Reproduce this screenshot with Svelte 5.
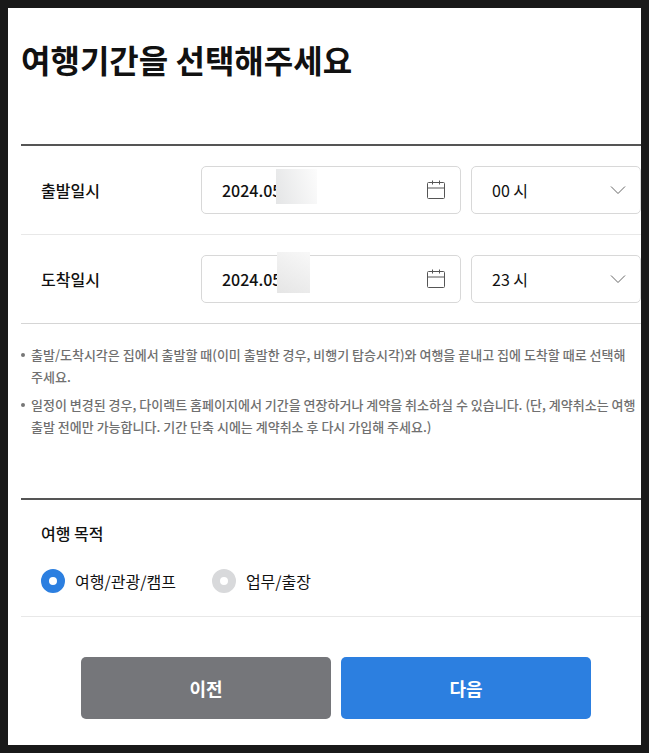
<script>
    let schedule = [
        { id: "departure", label: "출발일시", date: "2024.05", hour: "00" },
        { id: "arrival", label: "도착일시", date: "2024.05", hour: "23" },
    ];

    let purpose = "travel";

    const hours = Array.from({ length: 24 }, (_, i) =>
        String(i).padStart(2, "0"),
    );

    const notes = [
        "출발/도착시각은 집에서 출발할 때(이미 출발한 경우, 비행기 탑승시각)와 여행을 끝내고 집에 도착할 때로 선택해\n주세요.",
        "일정이 변경된 경우, 다이렉트 홈페이지에서 기간을 연장하거나 계약을 취소하실 수 있습니다. (단, 계약취소는 여행\n출발 전에만 가능합니다. 기간 단축 시에는 계약취소 후 다시 가입해 주세요.)",
    ];

    const purposes = [
        { value: "travel", label: "여행/관광/캠프" },
        { value: "business", label: "업무/출장" },
    ];
</script>

<main class="frame">
    <form class="content" on:submit|preventDefault>
        <h1>여행기간을 선택해주세요</h1>

        <div class="schedule">
            {#each schedule as item}
                <div class="row">
                    <label class="row-label" for="{item.id}-date"
                        >{item.label}</label
                    >
                    <div class="field date-field">
                        <input
                            type="text"
                            id="{item.id}-date"
                            bind:value={item.date}
                        />
                        <span class="mask {item.id}"></span>
                        <button
                            type="button"
                            class="calendar-btn"
                            aria-label="달력"
                        >
                            <svg width="20" height="20" viewBox="0 0 20 20">
                                <rect x="1.5" y="2.5" width="17" height="16" rx="1" />
                                <path d="M1.5 8h17M6.5 0.5v4M13.5 0.5v4" />
                            </svg>
                        </button>
                    </div>
                    <div class="field hour-field">
                        <select
                            aria-label="{item.label} 시각"
                            bind:value={item.hour}
                        >
                            {#each hours as hour}
                                <option value={hour}>{hour} 시</option>
                            {/each}
                        </select>
                        <svg
                            class="chevron"
                            width="16"
                            height="10"
                            viewBox="0 0 16 10"
                        >
                            <path d="M1 1.5l7 7 7-7" />
                        </svg>
                    </div>
                </div>
            {/each}
        </div>

        <ul class="notes">
            {#each notes as note}
                <li>{note}</li>
            {/each}
        </ul>

        <fieldset class="purpose">
            <legend>여행 목적</legend>
            <div class="options">
                {#each purposes as option}
                    <label class="option">
                        <input
                            type="radio"
                            name="purpose"
                            value={option.value}
                            bind:group={purpose}
                        />
                        {option.label}
                    </label>
                {/each}
            </div>
        </fieldset>

        <div class="actions">
            <button type="button" class="btn prev">이전</button>
            <button type="submit" class="btn next">다음</button>
        </div>
    </form>
</main>

<style>
    :global(body) {
        margin: 0;
        background: #191919;
    }

    .frame {
        border: 8px solid #191919;
        background: #fff;
        color: #111;
        overflow: hidden;
        font-family: "Noto Sans CJK KR", sans-serif;
        font-size: 16px;
        line-height: 24px;
    }

    /* the form runs on past the right edge of the frame */
    .content {
        margin: 0 -10px 0 13px;
        padding: 27px 0 26px;
    }

    h1 {
        margin: 0 0 61px;
        font-size: 32px;
        line-height: 48px;
        font-weight: 700;
    }

    .schedule {
        border-top: 2px solid #555;
        border-bottom: 1px solid #d5d5d5;
    }

    .row {
        display: grid;
        grid-template-columns: 150px minmax(0, 26fr) minmax(0, 17fr);
        gap: 10px;
        align-items: center;
        padding: 20px 10px 20px 20px;
    }

    .row + .row {
        border-top: 1px solid #e8e8e8;
    }

    .row-label,
    legend {
        font-weight: 500;
    }

    .field {
        position: relative;
        display: flex;
        align-items: center;
        box-sizing: border-box;
        height: 48px;
        border: 1px solid #d8d8d8;
        border-radius: 5px;
    }

    .field input,
    .field select {
        flex: 1;
        min-width: 0;
        height: 46px;
        padding: 0 20px;
        border: 0;
        background: none;
        color: #111;
        font-family: inherit;
        font-size: 16px;
        font-weight: 500;
        outline: none;
    }

    .field select {
        appearance: none;
        font-weight: 400;
        cursor: pointer;
    }

    .mask {
        position: absolute;
        pointer-events: none;
    }

    .mask.departure {
        top: 2px;
        left: 74px;
        width: 41px;
        height: 35px;
        background: linear-gradient(75deg, #e4e5e6, #fcfcfc);
    }

    .mask.arrival {
        top: -4px;
        left: 75px;
        width: 33px;
        height: 41px;
        background: linear-gradient(30deg, #e5e5e5, #f8f8f8);
    }

    .calendar-btn {
        display: flex;
        padding: 0;
        margin-right: 14px;
        border: 0;
        background: none;
        cursor: pointer;
    }

    .field svg {
        fill: none;
        stroke: #555;
    }

    .field .chevron {
        position: absolute;
        right: 14px;
        stroke: #666;
        pointer-events: none;
    }

    .notes {
        display: grid;
        gap: 6px;
        margin: 0;
        padding: 20px 0 60px;
        list-style: none;
        color: #707070;
        font-size: 13px;
        font-weight: 500;
        line-height: 22px;
    }

    .notes li {
        position: relative;
        padding-left: 10px;
        white-space: pre-line;
        word-break: break-all;
    }

    .notes li::before {
        content: "";
        position: absolute;
        top: 9px;
        left: 0;
        width: 4px;
        height: 4px;
        border-radius: 50%;
        background: #777;
    }

    .purpose {
        margin: 0;
        padding: 21px 20px 23px;
        border: 0;
        border-top: 2px solid #555;
        border-bottom: 1px solid #e8e8e8;
    }

    legend {
        float: left;
        width: 100%;
        padding: 0;
        margin-bottom: 24px;
    }

    .options {
        clear: both;
        display: flex;
        gap: 36px;
    }

    .option {
        display: flex;
        align-items: center;
        gap: 10px;
        cursor: pointer;
    }

    .option input {
        appearance: none;
        box-sizing: border-box;
        width: 24px;
        height: 24px;
        margin: 0;
        border: 8px solid #d8d9db;
        border-radius: 50%;
        background: #fff;
    }

    .option input:checked {
        border-color: #2c7fe0;
    }

    .actions {
        display: flex;
        justify-content: center;
        gap: 10px;
        padding: 40px 60px 0;
    }

    .btn {
        flex: 1;
        height: 62px;
        border: 0;
        border-radius: 5px;
        color: #fff;
        font-family: inherit;
        font-size: 18px;
        font-weight: 700;
        cursor: pointer;
    }

    .prev {
        background: #75767a;
    }

    .next {
        background: #2c7fe0;
    }
</style>
